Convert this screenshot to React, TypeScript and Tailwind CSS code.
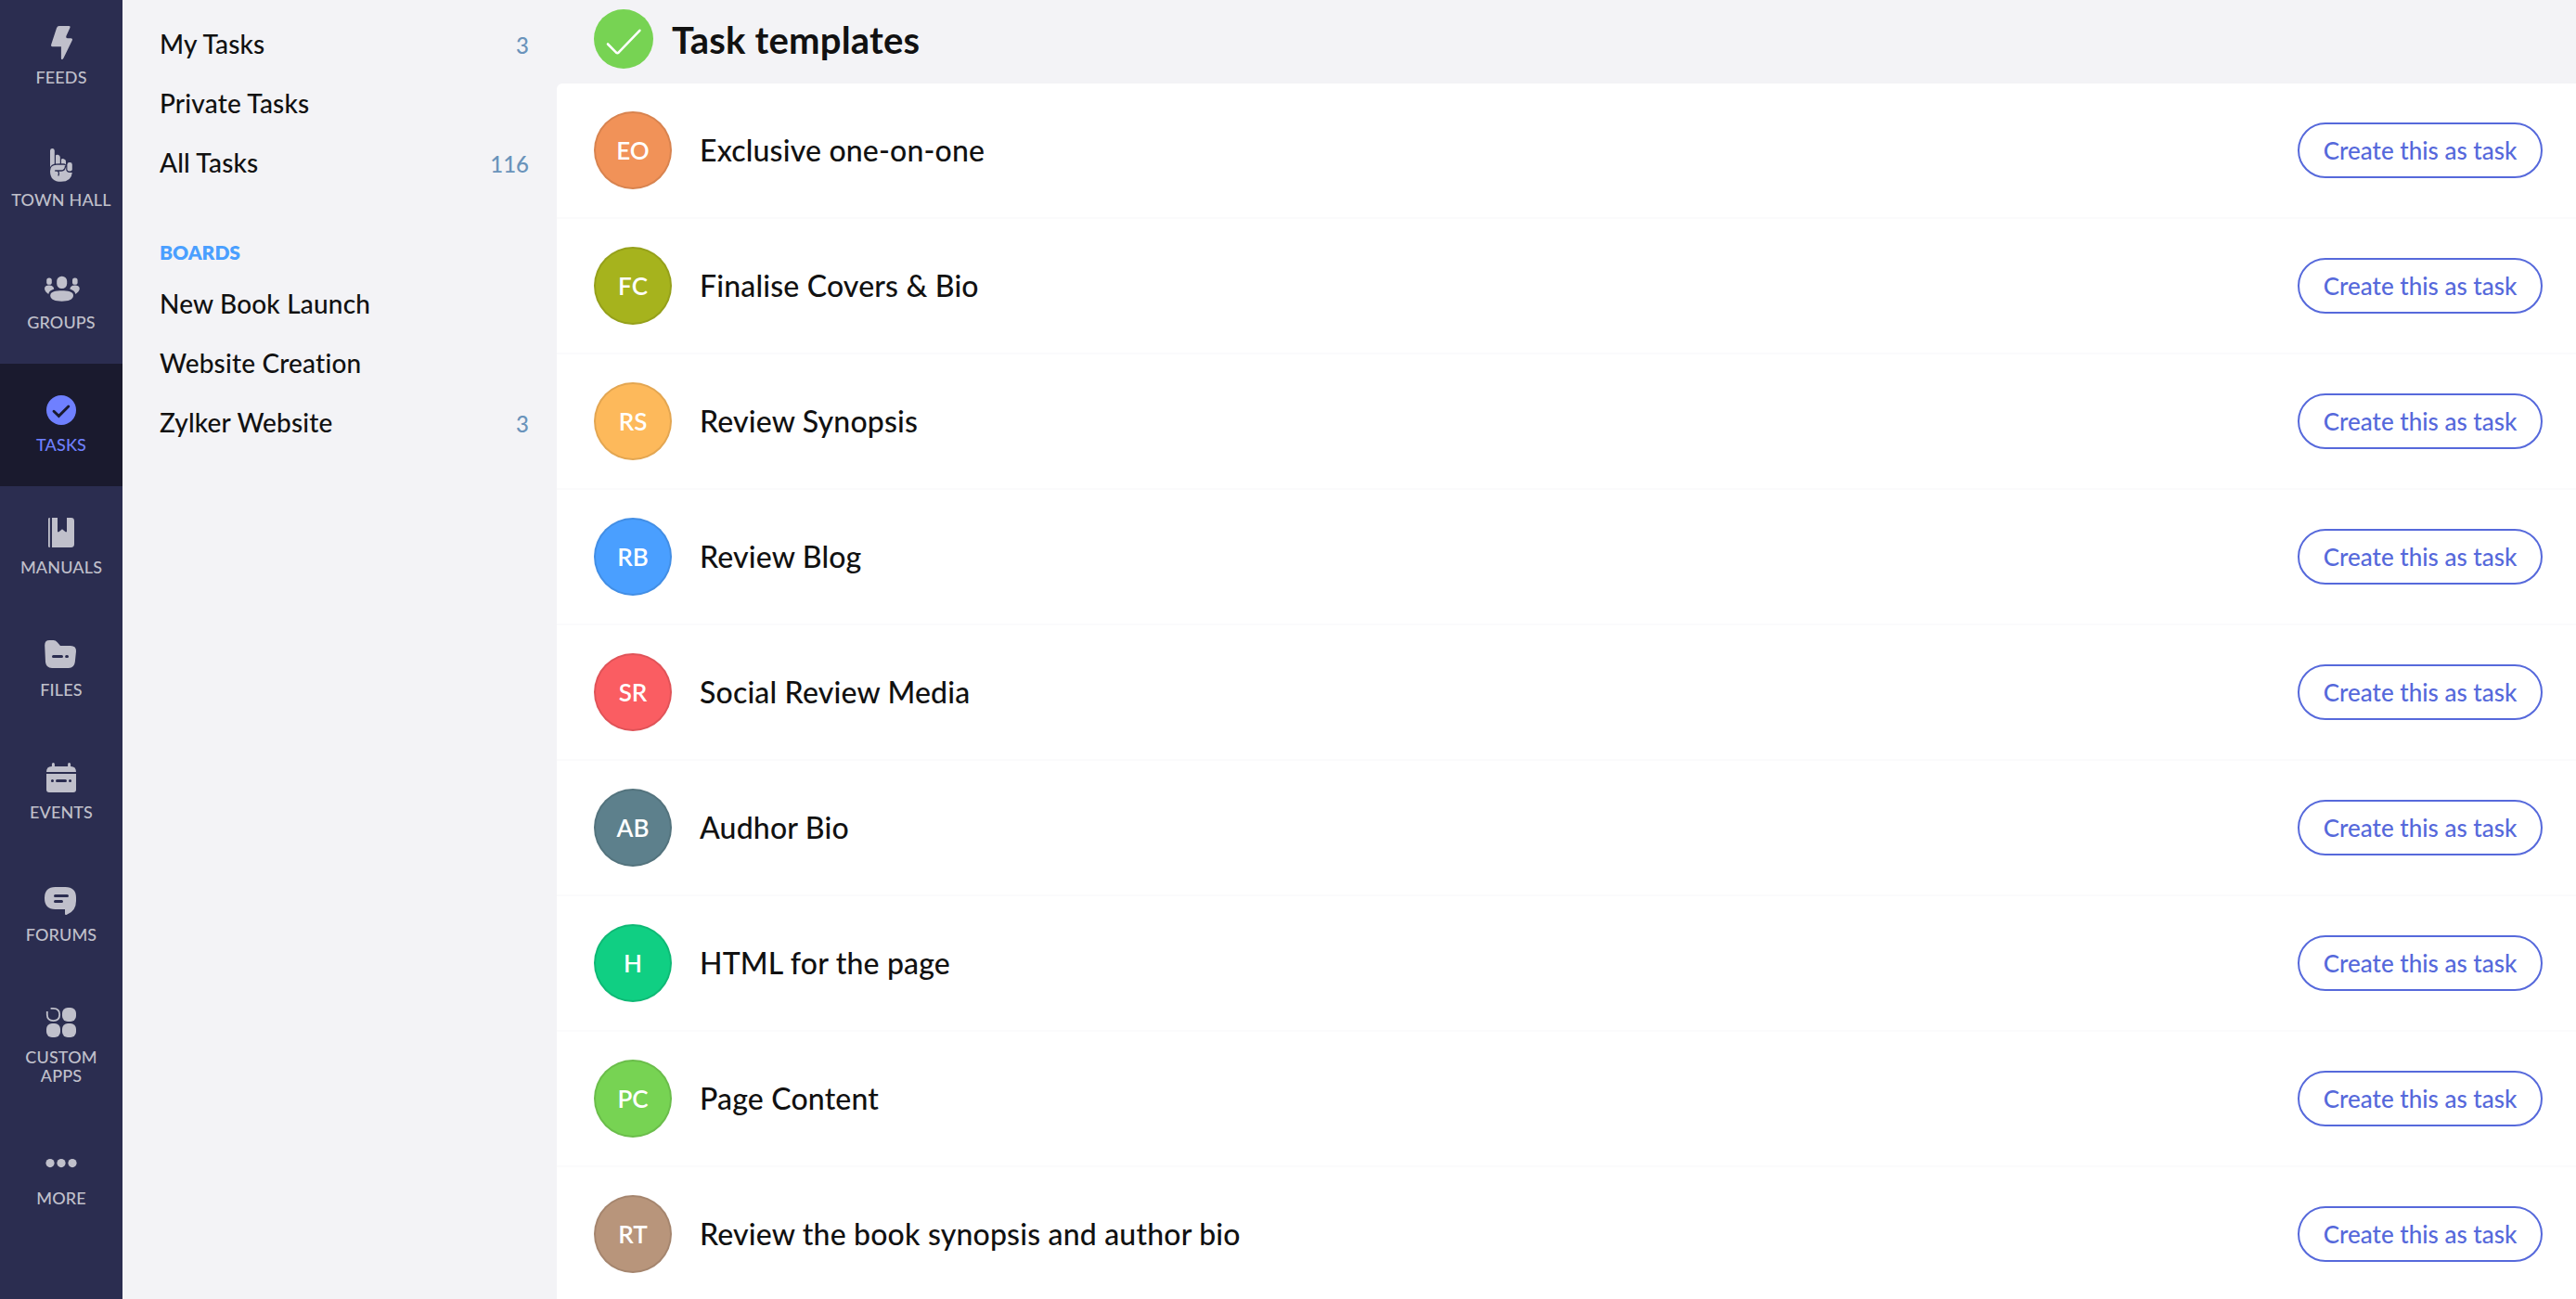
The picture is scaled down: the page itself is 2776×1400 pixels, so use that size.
import type { ReactNode } from 'react';

type NavItem = { label: string; icon: ReactNode; active?: boolean };
type SideItem = { name: string; count?: number };
type Template = { initials: string; title: string; color: string };

const navItems: NavItem[] = [
  {
    label: 'FEEDS',
    icon: (
      <path d="M17.8 2H28.4q1.8 0 1.1 1.8L25.3 13q-.7 2 1.3 2.2H30.4q2.2 .2 1.4 2.2L22.4 36.8q-.8 1.4-1.8 1.2-.7-.1-.7-1.1V24.2H10.4q-1.8 0-1.3-2L15 4.2Q15.7 2 17.8 2z" />
    ),
  },
  {
    label: 'TOWN HALL',
    icon: (
      <>
        <path d="M8 22V4.2Q8.2 2 10.4 2T12.8 4.2V18.6Q9.6 19.4 8 22z" />
        <path d="M14 18.4V9.6Q14.2 8.4 16.4 8.8 18.8 9.4 18.8 11.4V18.2z" />
        <path d="M20 18.2V14Q20.2 12.8 22.6 13.2 25 13.8 25 15.8V19.4Q24 18.2 22.4 18.2z" />
        <rect x="26.4" y="17" width="5.4" height="9.6" rx="2.4" />
        <path d="M8 26.4Q8 19.8 15 19.8H23Q25 19.8 25.2 22V25Q26 28 29 28H31.8Q31 37.8 19.8 37.8 8 37.8 8 26.4z" />
        <path d="M13.2 26H20.2Q24.2 25.8 24.6 20.6M16 26.2Q18.4 27.8 16.8 31.6" fill="none" stroke="#2b2d50" strokeWidth="1.3" />
      </>
    ),
  },
  {
    label: 'GROUPS',
    icon: (
      <>
        <rect x="15.2" y="7.7" width="11" height="13.4" rx="5.3" />
        <path d="M20.6 23.2C27 23.2 33 24 33 28.6 33 33 27.4 34.8 20.6 34.8S8.2 33 8.2 28.6C8.2 24 14.2 23.2 20.6 23.2z" />
        <rect x="4.2" y="9.4" width="5.6" height="7.4" rx="2.6" />
        <rect x="32" y="9.4" width="5.6" height="7.4" rx="2.6" />
        <path d="M6.4 17.6C9 17.6 11.6 18.2 12.2 21.4 9 22.4 6.8 24 6.2 27 4.4 25.6 2 23.6 2 21 2.2 18.4 4.4 17.6 6.4 17.6z" />
        <path d="M35.2 17.6C32.6 17.6 30 18.2 29.4 21.4 32.6 22.4 34.8 24 35.4 27 37.2 25.6 39.8 23.6 39.8 21 39.6 18.4 37.2 17.6 35.2 17.6z" />
      </>
    ),
  },
  {
    label: 'TASKS',
    active: true,
    icon: (
      <>
        <circle cx="20" cy="20" r="16" />
        <path d="M12 21.2L17.4 26.4 27.8 16" fill="none" stroke="#1a1a2e" strokeWidth="2.9" strokeLinecap="round" />
      </>
    ),
  },
  {
    label: 'MANUALS',
    icon: (
      <>
        <path d="M6 5Q6 4 7.8 4V36Q6 36 6 35z" />
        <path d="M10 4H16V19.3H17.4L21 16.3 24.6 19.3H26V4H30.6Q34 4 34 7.4V32.6Q34 36 30.6 36H10z" />
      </>
    ),
  },
  {
    label: 'FILES',
    icon: (
      <>
        <path d="M2.2 9.4Q2.2 4 7.4 4H11.4Q14 4 15.8 6.2L19 10H30Q36.4 10 36 16L34.8 27.6Q34 34 28 34H10Q3.6 34 3 27.6z" />
        <path d="M11.5 21.5H20.5M25.6 21.5H26.5" stroke="#2b2d50" strokeWidth="3" strokeLinecap="round" />
      </>
    ),
  },
  {
    label: 'EVENTS',
    icon: (
      <>
        <path d="M11.4 5.4V9M28.6 5.4V9" stroke="#c0c0cb" strokeWidth="3" strokeLinecap="round" />
        <path d="M4 14Q4 8 9.6 8H30.4Q36 8 36 14z" />
        <path d="M4 16H36V33Q36 36 33 36H7Q4 36 4 33z" />
        <path d="M10.4 23.4H10.5M15.5 23.4H24.5M29.5 23.4H29.6" stroke="#2b2d50" strokeWidth="3" strokeLinecap="round" />
      </>
    ),
  },
  {
    label: 'FORUMS',
    icon: (
      <>
        <path d="M13.6 6H24.4Q36 6 36 17.6V21Q36 32 26 35.8 24 36.4 24 35V30H13.6Q2 30 2 18 2 6 13.6 6z" />
        <path d="M13.5 15.4H26.5M13.5 21.4H20.5" stroke="#2b2d50" strokeWidth="3" strokeLinecap="round" />
      </>
    ),
  },
  {
    label: 'CUSTOM APPS',
    icon: (
      <>
        <path d="M8.6 4.9H11.5Q18.2 4.9 18.2 11.5T11.5 18.1 4.8 11.5V8" fill="none" stroke="#c0c0cb" strokeWidth="1.8" />
        <rect x="21" y="4" width="15" height="15" rx="6" />
        <rect x="4" y="21" width="15" height="15" rx="6" />
        <rect x="21" y="21" width="15" height="15" rx="6" />
      </>
    ),
  },
  {
    label: 'MORE',
    icon: (
      <>
        <circle cx="8" cy="19.6" r="4.6" />
        <circle cx="20" cy="19.6" r="4.6" />
        <circle cx="32" cy="19.6" r="4.6" />
      </>
    ),
  },
];

const taskViews: SideItem[] = [
  { name: 'My Tasks', count: 3 },
  { name: 'Private Tasks' },
  { name: 'All Tasks', count: 116 },
];

const boards: SideItem[] = [
  { name: 'New Book Launch' },
  { name: 'Website Creation' },
  { name: 'Zylker Website', count: 3 },
];

const templates: Template[] = [
  { initials: 'EO', title: 'Exclusive one-on-one', color: 'bg-[#f19258]' },
  { initials: 'FC', title: 'Finalise Covers & Bio', color: 'bg-[#a6b31d]' },
  { initials: 'RS', title: 'Review Synopsis', color: 'bg-[#fdb95b]' },
  { initials: 'RB', title: 'Review Blog', color: 'bg-[#4a9fff]' },
  { initials: 'SR', title: 'Social Review Media', color: 'bg-[#fa5d62]' },
  { initials: 'AB', title: 'Audhor Bio', color: 'bg-[#5d808c]' },
  { initials: 'H', title: 'HTML for the page', color: 'bg-[#10cf83]' },
  { initials: 'PC', title: 'Page Content', color: 'bg-[#77d353]' },
  { initials: 'RT', title: 'Review the book synopsis and author bio', color: 'bg-[#b8957b]' },
];

function NavButton({ item }: { item: NavItem }) {
  return (
    <a
      className={`flex min-h-[132px] flex-col items-center px-2 pt-[30px] pb-[35px] text-center ${
        item.active ? 'bg-[#1a1a2e] text-[#6f80ff]' : 'text-[#c0c0cb]'
      }`}
    >
      <svg viewBox="0 0 40 40" className="size-10 shrink-0 fill-current">
        {item.icon}
      </svg>
      <span className="mt-[7px] text-lg leading-5 font-medium tracking-[0.15px]">{item.label}</span>
    </a>
  );
}

function SideLink({ item }: { item: SideItem }) {
  return (
    <a className="flex h-16 items-center justify-between text-[28px] leading-none font-medium text-[#111]">
      <span className="tracking-[0.18px]">{item.name}</span>
      {item.count && <span className="pt-[3px] text-2xl leading-none text-[#6a93bb]">{item.count}</span>}
    </a>
  );
}

function TemplateRow({ template }: { template: Template }) {
  return (
    <li className="flex h-[146px] shrink-0 items-center border-b-2 border-[#fbfbfc] pr-9 pl-10">
      <div
        className={`flex size-[84px] items-center justify-center rounded-full border-2 border-black/10 text-[26px] font-semibold text-white ${template.color}`}
      >
        {template.initials}
      </div>
      <span className="ml-[30px] flex-1 text-[32px] leading-none font-medium tracking-[0.18px]">{template.title}</span>
      <button className="h-[60px] w-[264px] rounded-full border-2 border-[#5669db] text-[26px] leading-none font-medium text-[#5669db]">
        Create this as task
      </button>
    </li>
  );
}

export default function App() {
  return (
    <div className="flex h-screen overflow-hidden bg-[#f3f3f6] font-['Lato',sans-serif] text-[#111] [font-variant-ligatures:no-common-ligatures]">
      <nav className="w-[132px] shrink-0 bg-[#2b2d50]">
        <div className="-mt-1 flex flex-col">
          {navItems.map((item) => (
            <NavButton key={item.label} item={item} />
          ))}
        </div>
      </nav>

      <aside className="w-[468px] shrink-0 pt-[15px] pr-[30px] pl-10">
        {taskViews.map((item) => (
          <SideLink key={item.name} item={item} />
        ))}
        <h2 className="mt-[51px] mb-[9px] text-[21px] leading-[28px] font-extrabold text-[#4a9fff]">BOARDS</h2>
        {boards.map((item) => (
          <SideLink key={item.name} item={item} />
        ))}
      </aside>

      <main className="flex flex-1 flex-col">
        <header className="flex h-[90px] shrink-0 items-center pb-1.5 pl-10">
          <svg viewBox="0 0 64 64" className="size-16" fill="none">
            <circle cx="32" cy="32" r="32" fill="#77d353" />
            <path d="M15 37.5L24 46.6Q25.4 47.6 26.8 46.4L49.4 22.8" stroke="white" strokeWidth="2.6" strokeLinecap="round" />
          </svg>
          <h1 className="mt-0.5 ml-5 text-[40px] leading-none font-bold tracking-[0.2px]">Task templates</h1>
        </header>

        <ul className="flex flex-1 flex-col overflow-hidden rounded-tl-md bg-white">
          {templates.map((template) => (
            <TemplateRow key={template.initials} template={template} />
          ))}
        </ul>
      </main>
    </div>
  );
}
